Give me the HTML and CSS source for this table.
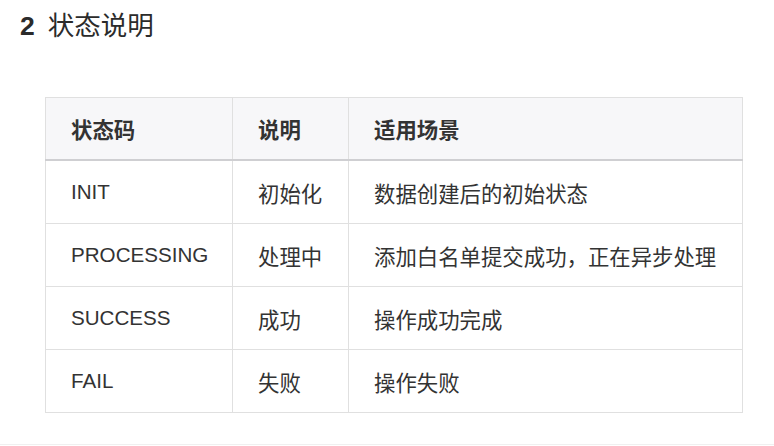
FILE: index.html
```
<!DOCTYPE html>
<html lang="zh">
<head>
<meta charset="utf-8">
<link rel="stylesheet" href="styles.css">
</head>
<body>
<h2 class="title"><span class="num">2</span>状态说明</h2>
<table class="status-table">
  <colgroup>
    <col class="c1"><col class="c2"><col class="c3">
  </colgroup>
  <thead>
    <tr><th>状态码</th><th>说明</th><th>适用场景</th></tr>
  </thead>
  <tbody>
    <tr><td class="code">INIT</td><td>初始化</td><td>数据创建后的初始状态</td></tr>
    <tr><td class="code">PROCESSING</td><td>处理中</td><td>添加白名单提交成功，正在异步处理</td></tr>
    <tr><td class="code">SUCCESS</td><td>成功</td><td>操作成功完成</td></tr>
    <tr><td class="code">FAIL</td><td>失败</td><td>操作失败</td></tr>
  </tbody>
</table>
<div class="rule"></div>
</body>
</html>
```
FILE: styles.css
```
html, body {
  margin: 0;
  padding: 0;
  background: #fff;
}
body {
  font-family: "Liberation Sans", "Noto Sans CJK SC", sans-serif;
  color: #333;
  width: 774px;
  height: 446px;
  overflow: hidden;
  position: relative;
}
.title {
  margin: 0;
  padding: 10px 0 0 20px;
  height: 87px;
  box-sizing: border-box;
  font-size: 26.5px;
  line-height: 32px;
  font-weight: normal;
  color: #2b2b2b;
}
.num {
  font-weight: bold;
  margin-right: 13px;
}
.status-table {
  margin-left: 45px;
  margin-top: 10px;
  border-collapse: collapse;
  table-layout: fixed;
  width: 697px;
  font-size: 21.4px;
  color: #333;
}
.c1 { width: 187px; }
.c2 { width: 116px; }
.c3 { width: 394px; }
.status-table th,
.status-table td {
  border: 1px solid #e0e0e0;
  padding: 0 0 0 25px;
  text-align: left;
  white-space: nowrap;
  overflow: hidden;
}
.status-table th {
  background: #f7f7f9;
  font-weight: bold;
  height: 61px;
  border-bottom: 2px solid #cfcfd2;
}
.status-table td {
  height: 62px;
}
.status-table td.code {
  font-size: 20.6px;
}
.rule {
  position: absolute;
  left: 0;
  right: 0;
  top: 444px;
  border-top: 1px solid #f0f0f0;
}
```
